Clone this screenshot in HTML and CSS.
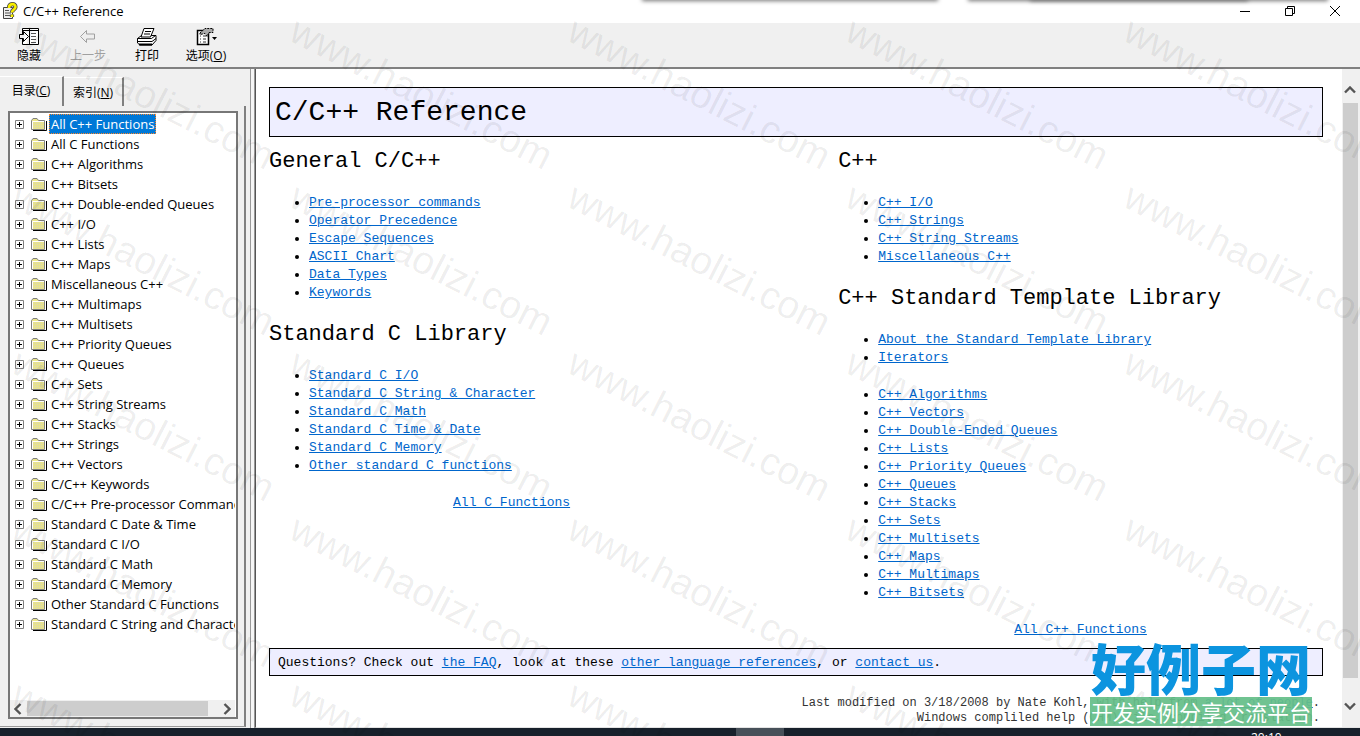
FILE: index.html
```html
<!DOCTYPE html>
<html lang="zh-CN">
<head>
<meta charset="utf-8">
<title>C/C++ Reference</title>
<link rel="stylesheet" href="styles.css">
</head>
<body>
<svg width="0" height="0" class="defs" aria-hidden="true">
  <defs>
    <symbol id="folder" viewBox="0 0 16 13">
      <path d="M2 12.500h13.500V3" fill="none" stroke="#000"/>
      <path d="M.5 11.500V2.500L2 .5h4L7.500 2.500h6V11.500z" fill="#e9e48c" stroke="#808080"/>
      <path d="M1.500 11V3.500H13" fill="none" stroke="#fff"/>
      <path d="M3 5.500h10M3 7.500h10M3 9.500h10" fill="none" stroke="#d6d6b4" stroke-dasharray="1 1"/>
    </symbol>
    <symbol id="chev" viewBox="0 0 12 8"><path d="M1 6.500L6 1.500l5 5" fill="none" stroke="#555" stroke-width="2.400"/></symbol>
  </defs>
</svg>
<div class="window">
  <header class="titlebar">
    <svg class="appicon" width="16" height="18" viewBox="0 0 16 18"><path d="M1.500 5.500h9v11h-9z" fill="#eee" stroke="#444"/><path d="M3 8.500h4M3 11h6M3 13.500h5" stroke="#555"/><path d="M7 6c0-5 6.500-5 6.500-1 0 2.500-3.500 2.500-3.500 5.500M10 12.500v2.500" fill="none" stroke="#444" stroke-width="4.200"/><path d="M7 6c0-5 6.500-5 6.500-1 0 2.500-3.500 2.500-3.500 5.500M10 12.500v2.500" fill="none" stroke="#f8ee00" stroke-width="2.600"/></svg>
    <span class="caption">C/C++ Reference</span>
    <button class="winbtn" aria-label="Minimize"><svg width="12" height="12"><path d="M1 6.500h10" stroke="#000"/></svg></button>
    <button class="winbtn" aria-label="Restore"><svg width="12" height="12" fill="none" stroke="#000"><path d="M1.500 3.500h7v7h-7zM3.500 3V1.500h7v7H9"/></svg></button>
    <button class="winbtn" aria-label="Close"><svg width="12" height="12" stroke="#000"><path d="M1 1l10 10M11 1L1 11"/></svg></button>
  </header>
  <nav class="toolbar">
    <button class="tool"><svg width="22" height="20" viewBox="0 0 22 20"><path d="M4.500 1.500h16v16h-16zM11.500 1v17M5 3.500h15" fill="#fff" stroke="#000"/><path d="M13 6.500h5M13 9.500h5M13 12.500h5M13 15.500h5" stroke="#555"/><path d="M1.500 7.500h4v-3l5 5-5 5v-3h-4z" fill="#fff" stroke="#000"/></svg>隐藏</button>
    <button class="tool" disabled><svg width="22" height="20" viewBox="0 0 22 20"><path d="M3.500 9.500l6-6v3.500h8v5h-8v3.500z" fill="#eee" stroke="#a0a0a0"/></svg>上一步</button>
    <button class="tool"><svg width="22" height="20" viewBox="0 0 22 20"><path d="M1.500 11.500l4-3h14.500v5l-4 4.500h-12l-2.500-2z" fill="#fff" stroke="#000"/><path d="M5 10l3-8.500h10l-3.500 8.500z" fill="#fff" stroke="#000"/><path d="M9 4.500h6M8 7h6" stroke="#000"/><path d="M1.500 11.500h14l4-3M2 14.500h14l4-3" fill="none" stroke="#000"/><path d="M3 17.500h13" stroke="#000" stroke-width="2"/></svg>打印</button>
    <button class="tool"><svg width="22" height="20" viewBox="0 0 22 20"><path d="M2.500 3.500h11v14h-11z" fill="#fff" stroke="#000" stroke-width="1.500"/><path d="M5 9h1M8 9h3M5 12h1M8 12h3M5 15h1M8 15h3" stroke="#333"/><path d="M5 6l5-4.500h8v4h-4l-2 4-2-3-5 1z" fill="#aaa" stroke="#000" stroke-dasharray="2 1"/><path d="M17 10h5l-2.500 3z"/></svg><span>选项(<u>O</u>)</span></button>
  </nav>
  <div class="work">
    <aside class="side">
      <div class="tabs"><button class="tab on">目录(<u>C</u>)</button><button class="tab">索引(<u>N</u>)</button></div>
      <div class="pane">
        <div class="treebox">
          <ul class="tree" id="tree"></ul>
          <div class="hbar"><svg class="left" width="12" height="8"><use href="#chev"/></svg><i></i><svg class="right" width="12" height="8"><use href="#chev"/></svg></div>
        </div>
      </div>
    </aside>
    <div class="split"></div>
    <main class="view">
      <article class="doc">
        <h1>C/C++ Reference</h1>
        <div class="cols">
          <section>
            <h2>General C/C++</h2>
            <ul>
              <li><a href="#">Pre-processor commands</a></li><li><a href="#">Operator Precedence</a></li><li><a href="#">Escape Sequences</a></li><li><a href="#">ASCII Chart</a></li><li><a href="#">Data Types</a></li><li><a href="#">Keywords</a></li>
            </ul>
            <h2>Standard C Library</h2>
            <ul>
              <li><a href="#">Standard C I/O</a></li><li><a href="#">Standard C String &amp; Character</a></li><li><a href="#">Standard C Math</a></li><li><a href="#">Standard C Time &amp; Date</a></li><li><a href="#">Standard C Memory</a></li><li><a href="#">Other standard C functions</a></li>
            </ul>
            <p class="all inset"><a href="#">All C Functions</a></p>
          </section>
          <section>
            <h2>C++</h2>
            <ul>
              <li><a href="#">C++ I/O</a></li><li><a href="#">C++ Strings</a></li><li><a href="#">C++ String Streams</a></li><li><a href="#">Miscellaneous C++</a></li>
            </ul>
            <h2>C++ Standard Template Library</h2>
            <ul>
              <li><a href="#">About the Standard Template Library</a></li><li><a href="#">Iterators</a></li>
            </ul>
            <ul>
              <li><a href="#">C++ Algorithms</a></li><li><a href="#">C++ Vectors</a></li><li><a href="#">C++ Double-Ended Queues</a></li><li><a href="#">C++ Lists</a></li><li><a href="#">C++ Priority Queues</a></li><li><a href="#">C++ Queues</a></li><li><a href="#">C++ Stacks</a></li><li><a href="#">C++ Sets</a></li><li><a href="#">C++ Multisets</a></li><li><a href="#">C++ Maps</a></li><li><a href="#">C++ Multimaps</a></li><li><a href="#">C++ Bitsets</a></li>
            </ul>
            <p class="all"><a href="#">All C++ Functions</a></p>
          </section>
        </div>
        <p class="faq">Questions? Check out <a href="#">the FAQ</a>, look at these <a href="#">other language references</a>, or <a href="#">contact us</a>.</p>
        <footer>Last modified on 3/18/2008 by Nate Kohl, with help from <a href="#">a lot of people</a>.<br>Windows compliled help (CHM) file, compiled translation.</footer>
      </article>
      <div class="vbar"><svg width="12" height="8"><use href="#chev"/></svg><i></i><svg class="down" width="12" height="8"><use href="#chev"/></svg></div>
    </main>
  </div>
  <div class="taskbar"><i></i><span>20:10</span></div>
  <div class="shade a"></div><div class="shade b"></div><div class="shade c"></div>
  <div class="marks" id="marks" aria-hidden="true"></div>
  <div class="logo"><strong>好例子网</strong><span>开发实例分享交流平台</span></div>
</div>
<script src="app.js"></script>
</body>
</html>
```
FILE: styles.css
```css
* { box-sizing: border-box; }
body { margin: 0; overflow: hidden; font-family: "Open Sans", "Noto Sans CJK SC", sans-serif; font-size: 13px; color: #000; }
button { font: inherit; color: inherit; border: 0; background: none; padding: 0; }
.defs { position: absolute; }
.window { position: relative; display: flex; flex-direction: column; height: 100vh; background: #f0f0f0; overflow: hidden; }
.titlebar { display: flex; align-items: center; height: 23px; background: #fff; padding: 0 0 1px 2px; }
.caption { flex: 1; margin-left: 5px; }
.winbtn { width: 45px; height: 22px; display: flex; align-items: center; justify-content: center; }
.winbtn:last-child { margin-right: 3px; }
.toolbar { display: flex; height: 46px; border-bottom: 2px solid #808080; }
.tool { display: flex; flex-direction: column; align-items: center; width: 59px; padding: 4px 1px 0 0; font-size: 12px; line-height: 18px; }
.tool:disabled { color: #a0a0a0; }
.work { flex: 1; display: flex; min-height: 0; }
.side { width: 250px; display: flex; flex-direction: column; flex: none; }
.tabs { display: flex; align-items: flex-end; height: 37px; font-size: 12px; }
.tab { height: 29px; width: 60px; border-top: 1px solid #fff; border-right: 2px solid #808080; }
.tab.on { width: 64px; height: 30px; padding-bottom: 4px; }
.pane { flex: 1; min-height: 0; margin: 0 4px 1px 0; padding: 5px 6px 7px 8px; border-right: 2px solid #808080; border-bottom: 1px solid #999; }
.treebox { height: 100%; display: flex; flex-direction: column; padding-right: 1px; border: 2px solid #777; background: #fff; overflow: hidden; }
.tree { flex: 1; margin: 0; padding: 1px 0 0 5px; list-style: none; overflow: hidden; }
.tree li { display: flex; align-items: center; height: 20px; white-space: nowrap; }
.tree li svg { flex: none; }
.tree .name { margin-left: 2px; padding: 0 1px; line-height: 18px; border: 1px dotted transparent; }
.tree .sel { background: #0078d7; color: #fff; border-color: #ff8728; }
.hbar { display: flex; align-items: center; justify-content: space-between; height: 17px; background: #f0f0f0; padding: 0 2px; }
.hbar i { flex: 1; margin: 0 13px 0 3px; height: 15px; background: #cdcdcd; }
.left { transform: rotate(-90deg); }
.right { transform: rotate(90deg); }
.split { width: 5px; border-left: 1px solid #999; border-right: 1px solid #999; background: #f6f6f6; }
.view { flex: 1; display: flex; min-width: 0; background: #fff; border-left: 1px solid #555; border-bottom: 1px solid #e3e3e3; }
.doc { flex: 1; min-width: 0; padding: 18px 19px 0 13px; font: 13px/18px "Liberation Mono", monospace; overflow: hidden; }
h1, h2 { font-weight: 400; margin: 0; }
h1 { height: 50px; padding: 0 5px; border: 1px solid #000; background: #eeeeff; font-size: 28px; line-height: 49px; }
.cols { display: grid; grid-template-columns: 54% 46%; }
h2 { font-size: 22px; line-height: 30px; margin: 10px 0 17px; }
.doc ul { margin: 0 0 19px; padding-left: 40px; }
.doc ul + h2 { margin-top: -1px; }
.doc a { color: #0066cc; }
.all { margin: 0; text-align: center; }
.inset { padding-right: 84px; }
.faq { height: 28px; margin: 9px 0 20px; padding: 5px 8px; line-height: 17px; border: 1px solid #000; background: #eeeeff; }
footer { font-size: 12px; line-height: 15px; text-align: right; color: #333; padding-right: 3px; }
.vbar { width: 18px; display: flex; flex-direction: column; align-items: center; background: #f0f0f0; padding: 17px 2px 17px 0; }
.vbar i { flex: 1; width: 15px; margin: 9px 0 24px; background: #cdcdcd; }
.down { transform: rotate(180deg); }
.taskbar { position: relative; height: 8px; background: #17202b; color: #fff; overflow: hidden; }
.taskbar i { display: block; width: 48px; height: 8px; margin-left: 736px; background: #475059; }
.taskbar span { position: absolute; left: 1251px; top: 3px; font-size: 12px; line-height: 14px; }
.shade { position: absolute; top: -5px; height: 5px; box-shadow: 0 1px 4px #777; }
.shade.a { left: 642px; width: 296px; }
.shade.b { left: 968px; width: 360px; }
.shade.c { left: 1030px; width: 218px; }
.marks { position: absolute; inset: 0; overflow: hidden; pointer-events: none; }
.marks span { position: absolute; font: 39px/40px "Liberation Sans", sans-serif; color: rgba(0, 0, 0, .07); transform-origin: 0 50%; transform: rotate(27deg); }
.logo { position: absolute; left: 1090px; top: 636px; width: 222px; text-align: center; white-space: nowrap; }
.logo strong { display: block; font: 900 55px/61px "Noto Sans CJK SC", sans-serif; color: #0c94df; }
.logo span { display: block; height: 29px; background: rgba(101, 190, 137, .93); color: #fff; font: 22px/28px "Noto Sans CJK SC", sans-serif; }
```
FILE: app.js
```javascript
const topics = ["All C++ Functions", "All C Functions", "C++ Algorithms", "C++ Bitsets", "C++ Double-ended Queues", "C++ I/O", "C++ Lists", "C++ Maps", "Miscellaneous C++", "C++ Multimaps", "C++ Multisets", "C++ Priority Queues", "C++ Queues", "C++ Sets", "C++ String Streams", "C++ Stacks", "C++ Strings", "C++ Vectors", "C/C++ Keywords", "C/C++ Pre-processor Commands", "Standard C Date & Time", "Standard C I/O", "Standard C Math", "Standard C Memory", "Other Standard C Functions", "Standard C String and Character"];
const tree = document.getElementById("tree");
topics.forEach((name, i) => {
  const li = document.createElement("li");
  li.innerHTML = '<svg width="16" height="9"><path d="M.5.5h8v8h-8z" fill="#fff" stroke="#808080"/><path d="M2 4.500h5M4.500 2v5" stroke="#000"/></svg><svg width="16" height="13"><use href="#folder"/></svg>';
  const label = document.createElement("span");
  label.className = i ? "name" : "name sel";
  label.textContent = name;
  li.append(label);
  tree.append(li);
});
const marks = document.getElementById("marks");
for (let y = 8; y < 736; y += 166) {
  for (let x = 15; x < 1360; x += 278) {
    const mark = document.createElement("span");
    mark.textContent = "www.haolizi.com";
    mark.style.left = x + "px";
    mark.style.top = y + "px";
    marks.append(mark);
  }
}
```
